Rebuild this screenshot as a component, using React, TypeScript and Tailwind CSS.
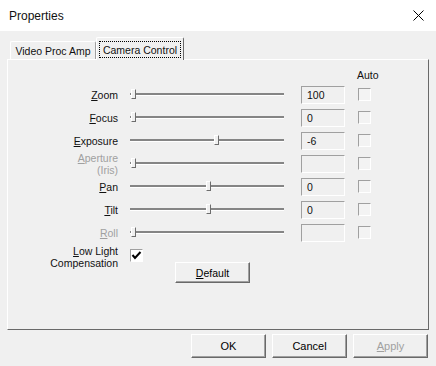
import React from "react";

type Row = {
  label: React.ReactNode;
  thumb: number;
  value: string;
  disabled?: boolean;
};

const rows: Row[] = [
  { label: <><u>Z</u>oom</>, thumb: 1, value: "100" },
  { label: <><u>F</u>ocus</>, thumb: 1, value: "0" },
  { label: <><u>E</u>xposure</>, thumb: 84, value: "-6" },
  { label: <><u>A</u>perture<br />(Iris)</>, thumb: 1, value: "", disabled: true },
  { label: <><u>P</u>an</>, thumb: 76, value: "0" },
  { label: <><u>T</u>ilt</>, thumb: 76, value: "0" },
  { label: <><u>R</u>oll</>, thumb: 1, value: "", disabled: true },
];

const Slider = ({ thumb }: { thumb: number }) => {
  return (
    <div className="relative ml-[12px] w-[154px] h-[23px] flex items-center">
      <div className="w-full h-[3px] border-t-[2px] border-[#858585] border-b border-b-white" />
      <div
        className="absolute top-[6px] w-[5px] h-[10px] bg-[#f0f0f0] border-l border-t border-white border-r border-b border-r-[#6d6d6d] border-b-[#6d6d6d]"
        style={{ left: thumb }}
      />
    </div>
  );
};

const CheckBox = ({ checked }: { checked?: boolean }) => {
  return (
    <div
      className={`w-[13px] h-[13px] border-l border-t border-[#a0a0a0] border-r border-b border-r-white border-b-white flex items-center justify-center ${
        checked ? "bg-white" : "bg-[#f3f3f3]"
      }`}
    >
      {checked && (
        <svg width="11" height="11" viewBox="0 0 11 11">
          <polyline points="1.5,5 4,8 9.5,2" fill="none" stroke="#000" strokeWidth="2" />
        </svg>
      )}
    </div>
  );
};

const WinButton = ({
  children,
  disabled,
  className = "",
}: {
  children: React.ReactNode;
  disabled?: boolean;
  className?: string;
}) => {
  return (
    <div
      className={`w-[75px] flex items-center justify-center bg-[#f0f0f0] border-l border-t border-white border-r border-b border-r-[#696969] border-b-[#696969] shadow-[inset_-1px_-1px_0_#a0a0a0] ${
        disabled ? "text-[#a0a0a0]" : "text-black"
      } ${className}`}
    >
      {children}
    </div>
  );
};

const App = () => {
  return (
    <div
      className="w-[436px] h-[366px] bg-[#f0f0f0] flex flex-col overflow-hidden text-[10.5px] leading-[12px] text-[#111]"
      style={{ fontFamily: '"Liberation Sans", Arial, sans-serif' }}
    >
      <div className="h-[31px] bg-white flex items-center justify-between pl-[9px] pr-[12px] shrink-0">
        <span className="text-[12px]">Properties</span>
        <svg width="11" height="11" viewBox="0 0 11 11">
          <path d="M0.5 0.5 L10.5 10.5 M10.5 0.5 L0.5 10.5" stroke="#000" strokeWidth="1" />
        </svg>
      </div>

      <div className="flex items-end pl-[10px] pt-[6px] h-[28px] shrink-0">
        <div className="w-[86px] h-[19px] flex items-center justify-center border-l border-t border-white border-r border-r-[#a0a0a0] rounded-tl-[2px] rounded-tr-[2px] mb-[-1px]">
          <span>Video Proc Amp</span>
        </div>
        <div className="relative z-10 w-[88px] h-[23px] flex items-start justify-center pt-[3px] bg-[#f0f0f0] border-l border-t border-white border-r border-r-[#696969] rounded-tl-[2px] rounded-tr-[2px] mb-[-1px]">
          <span className="border border-dotted border-black px-[3px] h-[17px] flex items-center">
            Camera Control
          </span>
        </div>
      </div>

      <div className="mx-[7px] w-[422px] h-[271px] shrink-0 border-l border-t border-white border-r border-b border-r-[#696969] border-b-[#696969] pt-[6px]">
        <div className="h-[17px] flex items-center pl-[349px]">Auto</div>

        {rows.map((r, i) => (
          <div key={i} className="h-[23px] flex items-center">
            <div
              className={`w-[110px] text-right ${r.disabled ? "text-[#a0a0a0]" : ""}`}
            >
              {r.label}
            </div>
            <Slider thumb={r.thumb} />
            <div className="ml-[17px] w-[44px] h-[18px] border-l border-t border-[#a0a0a0] border-r border-b border-r-white border-b-white flex items-center pl-[5px]">
              {r.value}
            </div>
            <div className="ml-[13px]">
              <CheckBox />
            </div>
          </div>
        ))}

        <div className="flex items-start mt-[1px]">
          <div className="w-[110px] text-right">
            <u>L</u>ow Light
            <br />
            Compensation
          </div>
          <div className="ml-[12px] flex flex-col pt-[4px]">
            <CheckBox checked />
            <WinButton className="ml-[45px] h-[21px]">
              <span>
                <u>D</u>efault
              </span>
            </WinButton>
          </div>
        </div>
      </div>

      <div className="flex justify-end gap-[6px] pr-[8px] mt-[4px]">
        <WinButton className="h-[24px] text-[11px]">OK</WinButton>
        <WinButton className="h-[24px] text-[11px]">Cancel</WinButton>
        <WinButton className="h-[24px] text-[11px]" disabled>
          <span>
            <u>A</u>pply
          </span>
        </WinButton>
      </div>
    </div>
  );
};

export default App;
